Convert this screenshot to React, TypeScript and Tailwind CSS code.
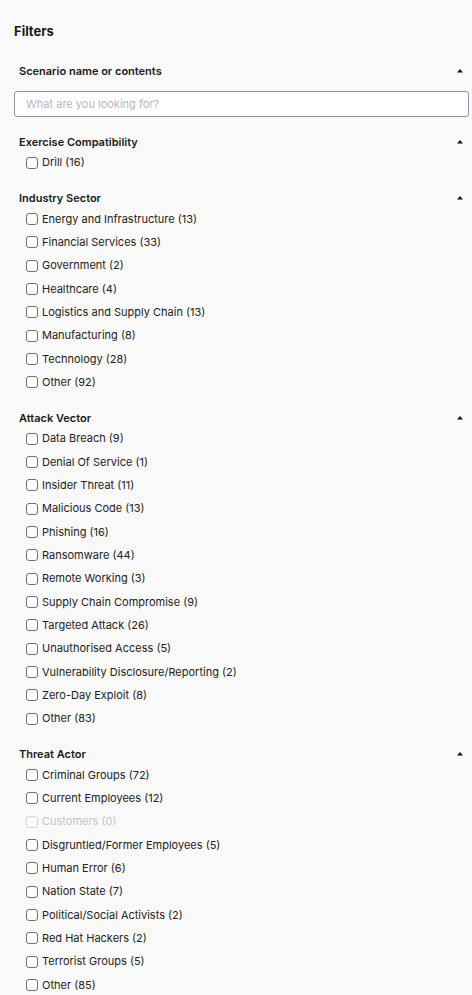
import React from 'react';

type Option = { label: string; count: number };

const sections: { title: string; options: Option[] }[] = [
  { title: 'Exercise Compatibility', options: [{ label: 'Drill', count: 16 }] },
  {
    title: 'Industry Sector',
    options: [
      { label: 'Energy and Infrastructure', count: 13 },
      { label: 'Financial Services', count: 33 },
      { label: 'Government', count: 2 },
      { label: 'Healthcare', count: 4 },
      { label: 'Logistics and Supply Chain', count: 13 },
      { label: 'Manufacturing', count: 8 },
      { label: 'Technology', count: 28 },
      { label: 'Other', count: 92 },
    ],
  },
  {
    title: 'Attack Vector',
    options: [
      { label: 'Data Breach', count: 9 },
      { label: 'Denial Of Service', count: 1 },
      { label: 'Insider Threat', count: 11 },
      { label: 'Malicious Code', count: 13 },
      { label: 'Phishing', count: 16 },
      { label: 'Ransomware', count: 44 },
      { label: 'Remote Working', count: 3 },
      { label: 'Supply Chain Compromise', count: 9 },
      { label: 'Targeted Attack', count: 26 },
      { label: 'Unauthorised Access', count: 5 },
      { label: 'Vulnerability Disclosure/Reporting', count: 2 },
      { label: 'Zero-Day Exploit', count: 8 },
      { label: 'Other', count: 83 },
    ],
  },
  {
    title: 'Threat Actor',
    options: [
      { label: 'Criminal Groups', count: 72 },
      { label: 'Current Employees', count: 12 },
      { label: 'Customers', count: 0 },
      { label: 'Disgruntled/Former Employees', count: 5 },
      { label: 'Human Error', count: 6 },
      { label: 'Nation State', count: 7 },
      { label: 'Political/Social Activists', count: 2 },
      { label: 'Red Hat Hackers', count: 2 },
      { label: 'Terrorist Groups', count: 5 },
      { label: 'Other', count: 85 },
    ],
  },
];

const Caret = () => (
  <svg width="6" height="4" viewBox="0 0 6 4" className="block">
    <path d="M3 0 L6 3.5 L0 3.5 Z" fill="#111" />
  </svg>
);

const SectionHeader = ({ title }: { title: string }) => (
  <div className="flex h-[18px] items-center justify-between pl-[5px] pr-[6px]">
    <span className="text-[11px] font-semibold text-[#1a1a1a]">{title}</span>
    <Caret />
  </div>
);

const CheckRow = ({ option }: { option: Option }) => {
  const disabled = option.count === 0;
  return (
    <label
      className={`flex h-[23.33px] items-center gap-[4px] pl-[12px] text-[11px] text-[#222] ${
        disabled ? 'opacity-25' : ''
      }`}
    >
      <span className="block h-[12px] w-[12px] rounded-[3px] border border-[#6b7280] bg-white" />
      <span>
        {option.label} ({option.count})
      </span>
    </label>
  );
};

export default function App() {
  return (
    <div
      className="min-h-screen bg-[#f9f9f9] pl-[14px] pr-[3px] pt-[23px]"
      style={{ fontFamily: 'Inter, "Liberation Sans", sans-serif' }}
    >
      <h1 className="h-[16px] text-[13px] font-bold leading-[16px] text-[#1a1a1a]">Filters</h1>

      <div className="mt-[23px]">
        <SectionHeader title="Scenario name or contents" />
        <input
          type="text"
          placeholder="What are you looking for?"
          className="mt-[11px] block h-[26px] w-full rounded-[3px] border border-[#8a94a3] bg-white px-[11px] text-[11px] text-[#222] outline-none placeholder:text-[#b3b8c0]"
        />
      </div>

      {sections.map((section, i) => (
        <div key={section.title} className={i === 0 ? 'mt-[16px]' : 'mt-[15px]'}>
          <SectionHeader title={section.title} />
          {section.options.map((option) => (
            <CheckRow key={option.label} option={option} />
          ))}
        </div>
      ))}
    </div>
  );
}
